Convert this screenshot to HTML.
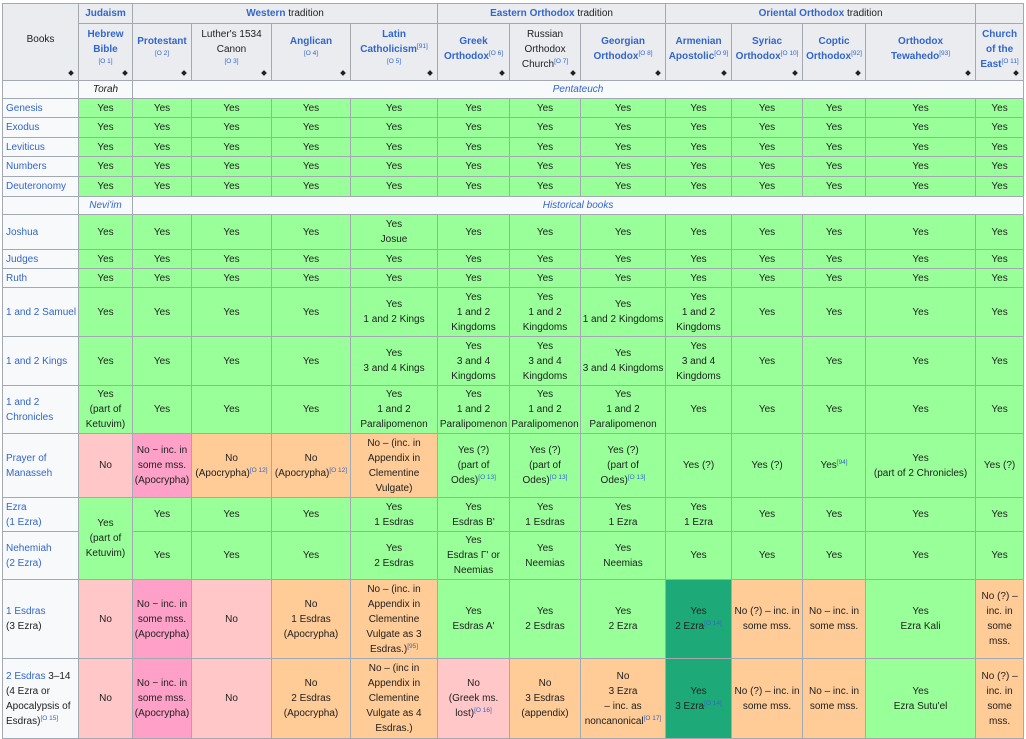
<!DOCTYPE html>
<html><head><meta charset="utf-8"><style>
html,body{margin:0;padding:0;background:#fff;width:1026px;height:730px;overflow:hidden}
body{font-family:"Liberation Sans",Arial,sans-serif;font-size:10px;color:#202122}
table{position:absolute;left:2px;top:3px;border-collapse:collapse;table-layout:fixed;width:1021px}
td,th{border:1px solid #a2a9b1;text-align:center;vertical-align:middle;padding:0 4px;line-height:15px;overflow:hidden}
th{background:#eaecf0;font-weight:bold;position:relative}
th.s{padding:0 1px 6px}
th.s:after{content:"";position:absolute;right:5px;bottom:5px;width:4px;height:4px;background:#202122;transform:rotate(45deg)}
.a{color:#3366cc}
.nw{white-space:nowrap}
sup{font-size:6.5px;line-height:0;color:#3366cc;vertical-align:4px;font-weight:normal}
td.b{background:#f8f9fa;text-align:left;padding:0 2px 0 3px;color:#3366cc}
.b span{color:#202122}
.y{background:#9f9}
.n{background:#ffc7c7}
.p{background:#ffa0c8}
.o{background:#ffcb96}
.g{background:#1eaa78}
.w{background:#f8f9fa}
.i{font-style:italic}
</style></head><body>
<table>
<colgroup><col style="width:76px"><col style="width:54px"><col style="width:59px"><col style="width:80px"><col style="width:79px"><col style="width:87px"><col style="width:72px"><col style="width:71px"><col style="width:85px"><col style="width:66px"><col style="width:71px"><col style="width:63px"><col style="width:110px"><col style="width:48px"></colgroup>
<tr style="height:20px"><th rowspan="2" class="s" style="font-weight:normal">Books</th><th class="a">Judaism</th><th colspan="4"><span class="a">Western</span> <span style="font-weight:normal">tradition</span></th><th colspan="3"><span class="a">Eastern Orthodox</span> <span style="font-weight:normal">tradition</span></th><th colspan="4"><span class="a">Oriental Orthodox</span> <span style="font-weight:normal">tradition</span></th><th></th></tr>
<tr style="height:57px">
<th class="s a">Hebrew<br>Bible<br><sup>[O 1]</sup></th>
<th class="s a">Protestant<br><sup>[O 2]</sup></th>
<th class="s" style="font-weight:normal">Luther's 1534<br>Canon<br><sup>[O 3]</sup></th>
<th class="s a">Anglican<br><sup>[O 4]</sup></th>
<th class="s a">Latin<br><span class="nw">Catholicism<sup>[91]</sup></span><br><sup>[O 5]</sup></th>
<th class="s a">Greek<br><span class="nw">Orthodox<sup>[O 6]</sup></span></th>
<th class="s" style="font-weight:normal">Russian<br>Orthodox<br><span class="nw">Church<sup>[O 7]</sup></span></th>
<th class="s a">Georgian<br><span class="nw">Orthodox<sup>[O 8]</sup></span></th>
<th class="s a">Armenian<br><span class="nw">Apostolic<sup>[O 9]</sup></span></th>
<th class="s a">Syriac<br><span class="nw">Orthodox<sup>[O 10]</sup></span></th>
<th class="s a">Coptic<br><span class="nw">Orthodox<sup>[92]</sup></span></th>
<th class="s a">Orthodox<br><span class="nw">Tewahedo<sup>[93]</sup></span></th>
<th class="s a">Church<br>of the<br><span class="nw">East<sup>[O 11]</sup></span></th></tr>
<tr style="height:18px" class="w"><td></td><td class="i">Torah</td><td colspan="12" class="i a">Pentateuch</td></tr>
<tr style="height:19px" class="y"><td class="b">Genesis</td><td>Yes</td><td>Yes</td><td>Yes</td><td>Yes</td><td>Yes</td><td>Yes</td><td>Yes</td><td>Yes</td><td>Yes</td><td>Yes</td><td>Yes</td><td>Yes</td><td>Yes</td></tr>
<tr style="height:20px" class="y"><td class="b">Exodus</td><td>Yes</td><td>Yes</td><td>Yes</td><td>Yes</td><td>Yes</td><td>Yes</td><td>Yes</td><td>Yes</td><td>Yes</td><td>Yes</td><td>Yes</td><td>Yes</td><td>Yes</td></tr>
<tr style="height:19px" class="y"><td class="b">Leviticus</td><td>Yes</td><td>Yes</td><td>Yes</td><td>Yes</td><td>Yes</td><td>Yes</td><td>Yes</td><td>Yes</td><td>Yes</td><td>Yes</td><td>Yes</td><td>Yes</td><td>Yes</td></tr>
<tr style="height:20px" class="y"><td class="b">Numbers</td><td>Yes</td><td>Yes</td><td>Yes</td><td>Yes</td><td>Yes</td><td>Yes</td><td>Yes</td><td>Yes</td><td>Yes</td><td>Yes</td><td>Yes</td><td>Yes</td><td>Yes</td></tr>
<tr style="height:20px" class="y"><td class="b">Deuteronomy</td><td>Yes</td><td>Yes</td><td>Yes</td><td>Yes</td><td>Yes</td><td>Yes</td><td>Yes</td><td>Yes</td><td>Yes</td><td>Yes</td><td>Yes</td><td>Yes</td><td>Yes</td></tr>
<tr style="height:18px" class="w"><td></td><td class="i a">Nevi'im</td><td colspan="12" class="i a">Historical books</td></tr>
<tr style="height:35px" class="y"><td class="b">Joshua</td><td>Yes</td><td>Yes</td><td>Yes</td><td>Yes</td><td>Yes<br>Josue</td><td>Yes</td><td>Yes</td><td>Yes</td><td>Yes</td><td>Yes</td><td>Yes</td><td>Yes</td><td>Yes</td></tr>
<tr style="height:19px" class="y"><td class="b">Judges</td><td>Yes</td><td>Yes</td><td>Yes</td><td>Yes</td><td>Yes</td><td>Yes</td><td>Yes</td><td>Yes</td><td>Yes</td><td>Yes</td><td>Yes</td><td>Yes</td><td>Yes</td></tr>
<tr style="height:19px" class="y"><td class="b">Ruth</td><td>Yes</td><td>Yes</td><td>Yes</td><td>Yes</td><td>Yes</td><td>Yes</td><td>Yes</td><td>Yes</td><td>Yes</td><td>Yes</td><td>Yes</td><td>Yes</td><td>Yes</td></tr>
<tr style="height:49px" class="y"><td class="b" style="white-space:nowrap">1 and 2 Samuel</td><td>Yes</td><td>Yes</td><td>Yes</td><td>Yes</td><td>Yes<br>1 and 2 Kings</td><td>Yes<br>1 and 2<br>Kingdoms</td><td>Yes<br>1 and 2<br>Kingdoms</td><td class="nw" style="padding:0">Yes<br>1 and 2 Kingdoms</td><td>Yes<br>1 and 2<br>Kingdoms</td><td>Yes</td><td>Yes</td><td>Yes</td><td>Yes</td></tr>
<tr style="height:49px" class="y"><td class="b">1 and 2 Kings</td><td>Yes</td><td>Yes</td><td>Yes</td><td>Yes</td><td>Yes<br>3 and 4 Kings</td><td>Yes<br>3 and 4<br>Kingdoms</td><td>Yes<br>3 and 4<br>Kingdoms</td><td class="nw" style="padding:0">Yes<br>3 and 4 Kingdoms</td><td>Yes<br>3 and 4<br>Kingdoms</td><td>Yes</td><td>Yes</td><td>Yes</td><td>Yes</td></tr>
<tr style="height:48px" class="y"><td class="b">1 and 2<br>Chronicles</td><td>Yes<br>(part of<br>Ketuvim)</td><td>Yes</td><td>Yes</td><td>Yes</td><td>Yes<br>1 and 2<br>Paralipomenon</td><td style="padding:0">Yes<br>1 and 2<br>Paralipomenon</td><td style="padding:0">Yes<br>1 and 2<br>Paralipomenon</td><td>Yes<br>1 and 2<br>Paralipomenon</td><td>Yes</td><td>Yes</td><td>Yes</td><td>Yes</td><td>Yes</td></tr>
<tr style="height:64px"><td class="b">Prayer of<br>Manasseh</td><td class="n">No</td><td class="p" style="padding:0">No − inc. in<br>some mss.<br>(Apocrypha)</td><td class="o" style="padding:0">No<br>(Apocrypha)<sup>[O 12]</sup></td><td class="o" style="padding:0">No<br>(Apocrypha)<sup>[O 12]</sup></td><td class="o">No – (inc. in<br>Appendix in<br>Clementine<br>Vulgate)</td><td class="y">Yes (?)<br>(part of<br>Odes)<sup>[O 13]</sup></td><td class="y">Yes (?)<br>(part of<br>Odes)<sup>[O 13]</sup></td><td class="y">Yes (?)<br>(part of<br>Odes)<sup>[O 13]</sup></td><td class="y">Yes (?)</td><td class="y">Yes (?)</td><td class="y">Yes<sup>[94]</sup></td><td class="y">Yes<br>(part of 2 Chronicles)</td><td class="y" style="padding:0">Yes (?)</td></tr>
<tr style="height:34px" class="y"><td class="b">Ezra<br>(1 Ezra)</td><td rowspan="2">Yes<br>(part of<br>Ketuvim)</td><td>Yes</td><td>Yes</td><td>Yes</td><td>Yes<br>1 Esdras</td><td>Yes<br>Esdras B'</td><td>Yes<br>1 Esdras</td><td>Yes<br>1 Ezra</td><td>Yes<br>1 Ezra</td><td>Yes</td><td>Yes</td><td>Yes</td><td>Yes</td></tr>
<tr style="height:48px" class="y"><td class="b">Nehemiah<br>(2 Ezra)</td><td>Yes</td><td>Yes</td><td>Yes</td><td>Yes<br>2 Esdras</td><td>Yes<br>Esdras Γ' or<br>Neemias</td><td>Yes<br>Neemias</td><td>Yes<br>Neemias</td><td>Yes</td><td>Yes</td><td>Yes</td><td>Yes</td><td>Yes</td></tr>
<tr style="height:79px"><td class="b">1 Esdras<br><span>(3 Ezra)</span></td><td class="n">No</td><td class="p" style="padding:0">No − inc. in<br>some mss.<br>(Apocrypha)</td><td class="n">No</td><td class="o">No<br>1 Esdras<br>(Apocrypha)</td><td class="o">No – (inc. in<br>Appendix in<br>Clementine<br>Vulgate as 3<br>Esdras.)<sup>[95]</sup></td><td class="y">Yes<br>Esdras A'</td><td class="y">Yes<br>2 Esdras</td><td class="y">Yes<br>2 Ezra</td><td class="g">Yes<br>2 Ezra<sup>[O 14]</sup></td><td class="o" style="padding:0">No (?) – inc. in<br>some mss.</td><td class="o" style="padding:0">No – inc. in<br>some mss.</td><td class="y">Yes<br>Ezra Kali</td><td class="o" style="padding:0">No (?) –<br>inc. in<br>some<br>mss.</td></tr>
<tr style="height:80px"><td class="b">2 Esdras <span>3–14<br>(4 Ezra or<br>Apocalypsis of<br>Esdras)</span><sup>[O 15]</sup></td><td class="n">No</td><td class="p" style="padding:0">No − inc. in<br>some mss.<br>(Apocrypha)</td><td class="n">No</td><td class="o">No<br>2 Esdras<br>(Apocrypha)</td><td class="o">No – (inc in<br>Appendix in<br>Clementine<br>Vulgate as 4<br>Esdras.)</td><td class="n">No<br>(Greek ms.<br>lost)<sup>[O 16]</sup></td><td class="o">No<br>3 Esdras<br>(appendix)</td><td class="o" style="padding:0">No<br>3 Ezra<br>– inc. as<br>noncanonical<sup>[O 17]</sup></td><td class="g">Yes<br>3 Ezra<sup>[O 14]</sup></td><td class="o" style="padding:0">No (?) – inc. in<br>some mss.</td><td class="o" style="padding:0">No – inc. in<br>some mss.</td><td class="y">Yes<br>Ezra Sutu'el</td><td class="o" style="padding:0">No (?) –<br>inc. in<br>some<br>mss.</td></tr>
</table>
</body></html>
